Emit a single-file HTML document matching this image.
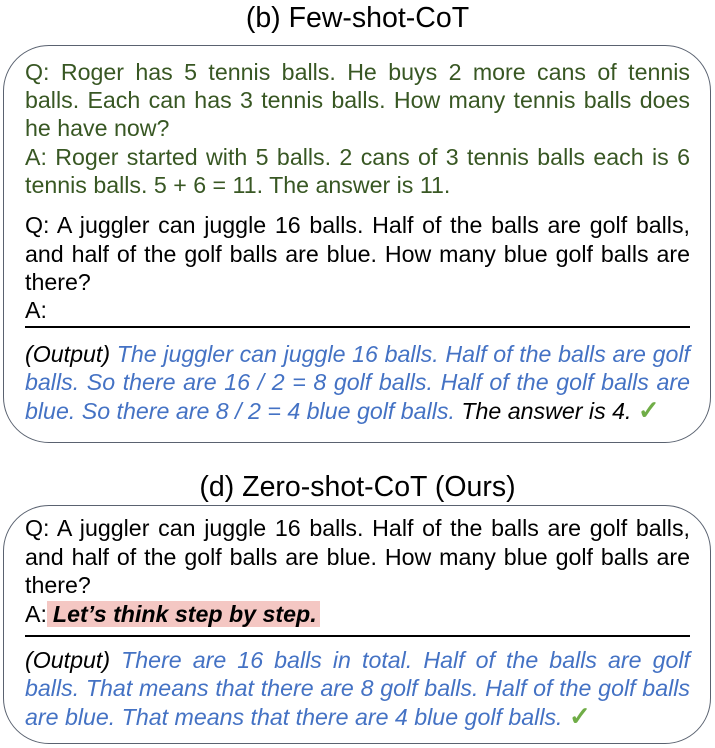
<!DOCTYPE html>
<html><head><meta charset="utf-8"><style>
body{margin:0;width:715px;height:748px;background:#fff;position:relative;font-family:"Liberation Sans",Arial,sans-serif;overflow:hidden}
.t{position:absolute;left:0;width:715px;text-align:center;font-size:28.5px;color:#000;line-height:32px}
.box{position:absolute;left:3px;width:706px;border:1.5px solid #5a6270;border-radius:46px}
.l{position:absolute;left:25px;width:665px;font-size:23.2px;line-height:28px;white-space:nowrap}
.j{text-align:justify;text-align-last:justify}
.g{color:#385723}
.b{color:#4472c4;font-style:italic}
.k{color:#000}
.ck{color:#70ad47;font-style:normal;font-size:26px;font-weight:bold}
.rule{position:absolute;left:25px;width:665px;height:1.5px;background:#000}
.hl{background:#f4c7c3;font-weight:bold;font-style:italic;padding:0 3px 0 6px}
</style></head><body>
<div class="t" style="top:2px">(b) Few-shot-CoT</div>
<div class="box" style="top:45px;height:396px"></div>
<div class="l g j" style="top:58px">Q: Roger has 5 tennis balls. He buys 2 more cans of tennis</div>
<div class="l g j" style="top:86px">balls. Each can has 3 tennis balls. How many tennis balls does</div>
<div class="l g" style="top:114px">he have now?</div>
<div class="l g j" style="top:143px">A: Roger started with 5 balls. 2 cans of 3 tennis balls each is 6</div>
<div class="l g" style="top:171px">tennis balls. 5 + 6 = 11. The answer is 11.</div>
<div class="l k j" style="top:211px">Q: A juggler can juggle 16 balls. Half of the balls are golf balls,</div>
<div class="l k j" style="top:240px">and half of the golf balls are blue. How many blue golf balls are</div>
<div class="l k" style="top:268px">there?</div>
<div class="l k" style="top:296px">A:</div>
<div class="rule" style="top:326px"></div>
<div class="l b j" style="top:340px"><span class="k">(Output)</span> The juggler can juggle 16 balls. Half of the balls are golf</div>
<div class="l b j" style="top:368px">balls. So there are 16 / 2 = 8 golf balls. Half of the golf balls are</div>
<div class="l b" style="top:396px">blue. So there are 8 / 2 = 4 blue golf balls. <span class="k">The answer is 4.</span> <span class="ck">✓</span></div>

<div class="t" style="top:471px">(d) Zero-shot-CoT (Ours)</div>
<div class="box" style="top:505px;height:237px"></div>
<div class="l k j" style="top:514px">Q: A juggler can juggle 16 balls. Half of the balls are golf balls,</div>
<div class="l k j" style="top:543px">and half of the golf balls are blue. How many blue golf balls are</div>
<div class="l k" style="top:571px">there?</div>
<div class="l k" style="top:600px">A:<span class="hl">Let’s think step by step.</span></div>
<div class="rule" style="top:635px"></div>
<div class="l b j" style="top:646px"><span class="k">(Output)</span> There are 16 balls in total. Half of the balls are golf</div>
<div class="l b j" style="top:674px">balls. That means that there are 8 golf balls. Half of the golf balls</div>
<div class="l b" style="top:702px">are blue. That means that there are 4 blue golf balls. <span class="ck">✓</span></div>
</body></html>
